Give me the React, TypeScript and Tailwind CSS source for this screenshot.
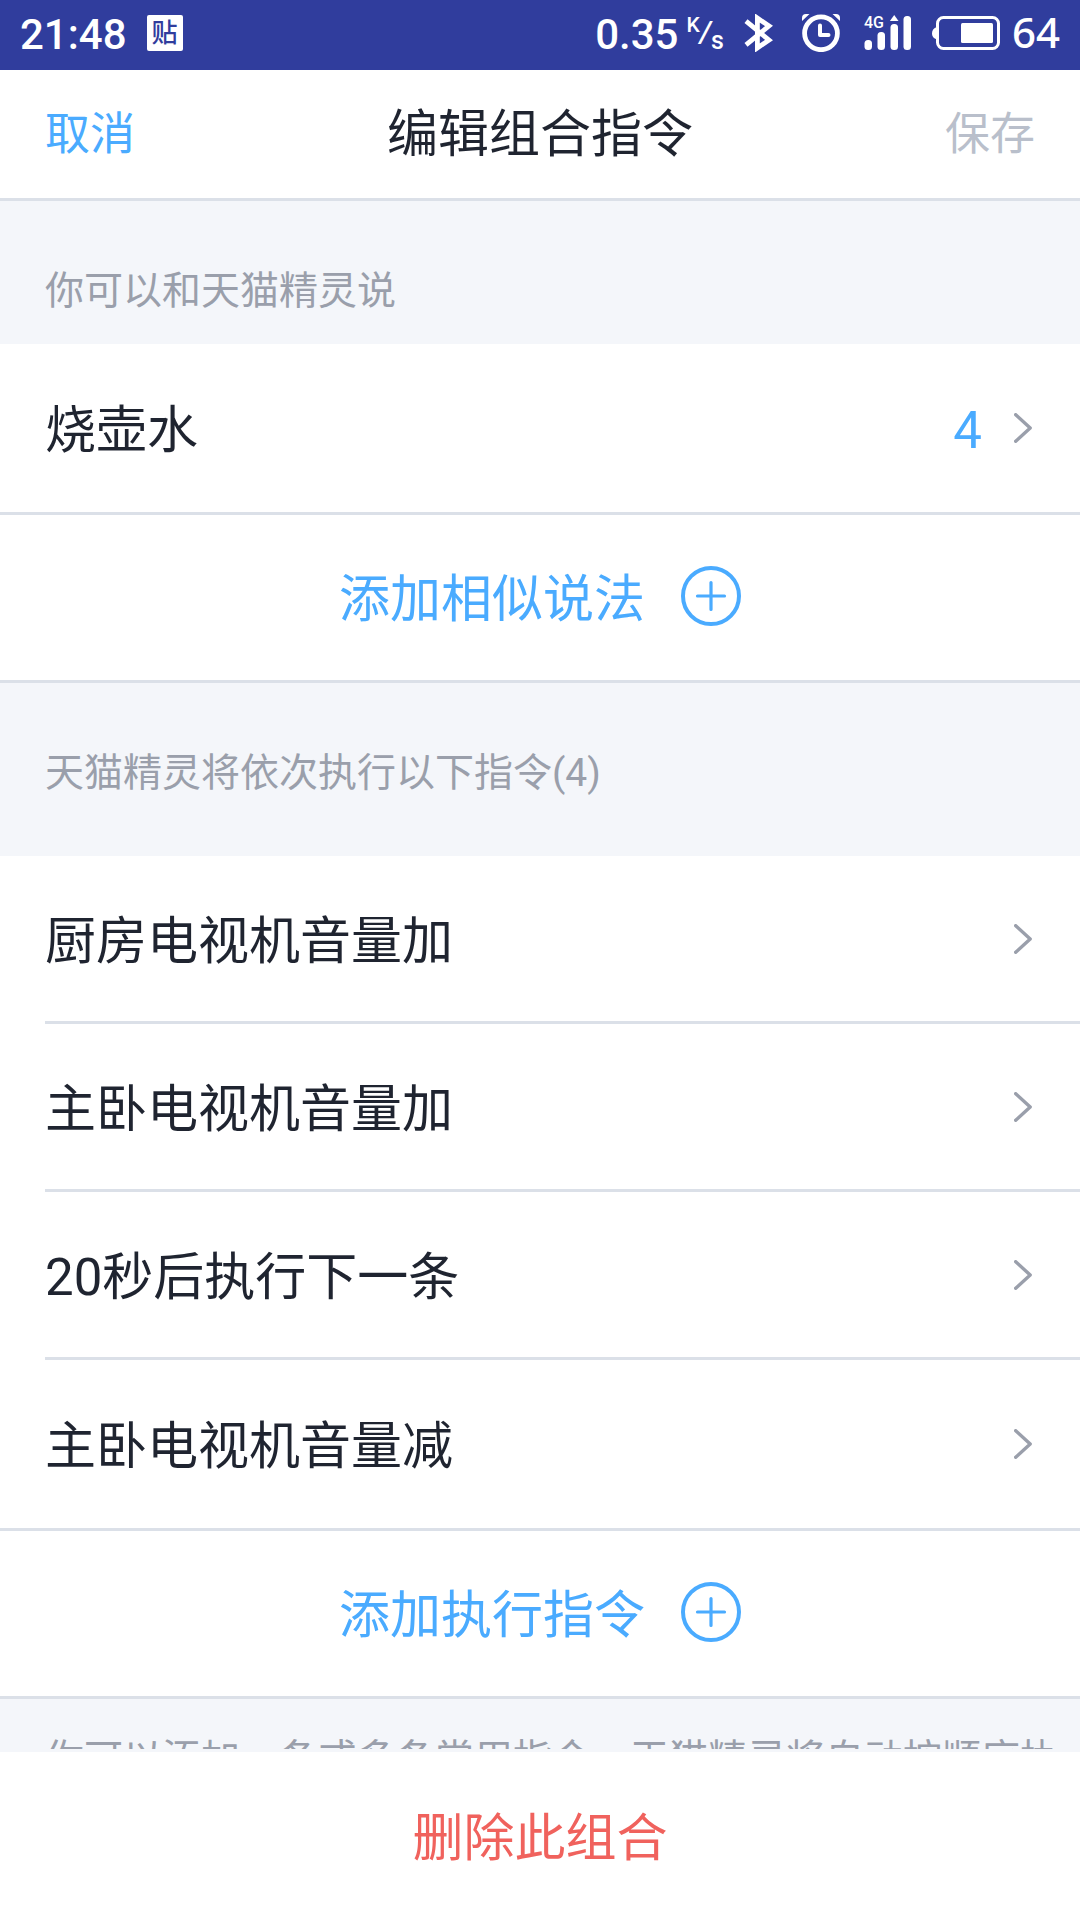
import React, { useState } from 'react';

const COMMANDS = ['厨房电视机音量加', '主卧电视机音量加', '20秒后执行下一条', '主卧电视机音量减'];

const Chevron: React.FC = () => (
  <svg className="w-[18px] h-[30px] shrink-0" viewBox="0 0 18 30" fill="none" stroke="#9a9fab" strokeWidth="3.4" strokeLinecap="round" strokeLinejoin="round">
    <path d="M1.7 1.7 16.2 15 1.7 28.3" />
  </svg>
);

const PlusCircle: React.FC = () => (
  <svg className="size-15 shrink-0" viewBox="0 0 60 60" fill="none" stroke="currentColor" strokeLinecap="round">
    <circle cx="30" cy="30" r="28" strokeWidth="4" />
    <path d="M30 16.5v27M16.5 30h27" strokeWidth="3.2" />
  </svg>
);

const BluetoothIcon: React.FC = () => (
  <svg className="w-[30px] h-[38px]" viewBox="0 0 30 38" fill="none" stroke="white" strokeWidth="4.8">
    <path d="M2 7.2 25 26 13.4 34V4L25 12 2 30.8" />
  </svg>
);

const AlarmIcon: React.FC = () => (
  <svg className="size-[38px]" viewBox="0 0 38 38" fill="none" stroke="white">
    <circle cx="19" cy="19.3" r="16.4" strokeWidth="4.8" />
    <path d="M18 11.5V21h8.5" strokeWidth="4" strokeLinecap="round" strokeLinejoin="round" />
    <path d="M0 7V4Q0 0 4 0h3.5ZM38 7V4Q38 0 34 0h-3.5Z" fill="white" stroke="none" />
  </svg>
);

const SignalIcon: React.FC = () => (
  <div className="relative">
    <span className="absolute left-0 -top-0.5 text-[16px] leading-5 font-medium">4G</span>
    <svg className="w-12 h-9" viewBox="0 0 48 36" fill="white">
      <rect x="0.5" y="25" width="7.5" height="10" rx="3.5" />
      <rect x="13.5" y="17" width="7.5" height="18" rx="3.5" />
      <rect x="26.5" y="9" width="7.5" height="26" rx="3.5" />
      <rect x="39.5" y="1" width="7.5" height="34" rx="3.5" />
      <path d="M30.2 0l4.300 6h-8.600Z" />
    </svg>
  </div>
);

const BatteryIcon: React.FC = () => (
  <svg className="w-[68px] h-[34px]" viewBox="0 0 68 34" fill="none">
    <rect x="5.5" y="1.5" width="61" height="31" rx="6" stroke="white" strokeWidth="3" />
    <path d="M5 11C1.5 12 0 14.5 0 17.5S1.5 22.5 5 23.5Z" fill="white" />
    <rect x="29" y="7" width="32" height="20" rx="1.5" fill="white" />
  </svg>
);

const StatusBar: React.FC = () => (
  <div className="h-[70px] shrink-0 bg-[#303d9d] text-white flex items-center justify-between px-5 text-[42px] leading-none font-medium">
    <div className="flex items-center gap-5">
      <span>21:48</span>
      <span className="size-9 rounded-xs bg-white text-[#303d9d] text-[26px] leading-9 text-center mb-1">贴</span>
    </div>
    <div className="flex items-center">
      <span>0.35</span>
      <div className="flex h-10 ml-2 leading-none">
        <span className="text-[21px]">K</span>
        <span className="text-[30px] pt-0.5 italic">/</span>
        <span className="text-[25px] self-end mb-0.5">s</span>
      </div>
      <div className="flex items-center mb-1">
        <div className="ml-5"><BluetoothIcon /></div>
        <div className="ml-7"><AlarmIcon /></div>
        <div className="ml-6"><SignalIcon /></div>
        <div className="ml-5 mr-3"><BatteryIcon /></div>
      </div>
      <span className="font-['Noto_Sans'] text-[42px] mb-1.5">64</span>
    </div>
  </div>
);

const AddButton: React.FC<{ label: string }> = ({ label }) => (
  <button className="w-full h-[168px] pb-1 bg-white border-b-3 border-[#dbe0e8] flex items-center justify-center gap-9 text-[#4aabff]">
    <span className="pt-2">{label}</span>
    <PlusCircle />
  </button>
);

const App: React.FC = () => {
  const [dirty] = useState(false);

  return (
    <div className="h-screen flex flex-col bg-[#f4f6fa] text-[#1f2430] text-[51px] leading-[60px] font-[Roboto,'Noto_Sans_CJK_SC',sans-serif]">
      <StatusBar />

      <header className="h-[131px] shrink-0 bg-white border-b-3 border-[#dbe0e8] px-[45px] pt-0.5 grid grid-cols-[1fr_auto_1fr] items-center">
        <button className="justify-self-start text-[45px] text-[#4aabff]">取消</button>
        <h1>编辑组合指令</h1>
        <button disabled={!dirty} className="justify-self-end text-[45px] disabled:text-[#b9bfcb]">保存</button>
      </header>

      <main className="flex-1 min-h-0 overflow-y-auto [scrollbar-width:none]">
        <h2 className="px-[45px] pt-[60px] pb-[23px] text-[39px] text-[#9a9fab]">你可以和天猫精灵说</h2>
        <button className="w-full h-[171px] bg-white border-b-3 border-[#dbe0e8] pl-[45px] pr-12 flex items-center text-left">
          <span className="flex-1 pt-1.5">烧壶水</span>
          <span className="mr-8 pt-1.5 text-[#4aabff]">4</span>
          <Chevron />
        </button>
        <AddButton label="添加相似说法" />

        <h2 className="px-[45px] pt-[60px] pb-[53px] text-[39px] text-[#9a9fab]">天猫精灵将依次执行以下指令({COMMANDS.length})</h2>
        <ul className="bg-white border-b-3 border-[#dbe0e8]">
          {COMMANDS.map((name) => (
            <li key={name} className="pl-[45px] group">
              <button className="w-full h-[168px] pr-12 flex items-center justify-between text-left border-b-3 border-[#dbe0e8] group-last:border-b-0">
                <span className="pt-1.5">{name}</span>
                <Chevron />
              </button>
            </li>
          ))}
        </ul>
        <AddButton label="添加执行指令" />

        <p className="pl-[45px] pr-4 pt-[30px] pb-[57px] text-[39px] text-[#9a9fab]">
          你可以添加一条或多条常用指令，天猫精灵将自动按顺序执行
        </p>
      </main>

      <footer className="h-[171px] shrink-0 bg-white border-t-3 border-[#f4f6fa]">
        <button className="w-full h-full pt-1.5 text-[#f0625d]">删除此组合</button>
      </footer>
    </div>
  );
};

export default App;
